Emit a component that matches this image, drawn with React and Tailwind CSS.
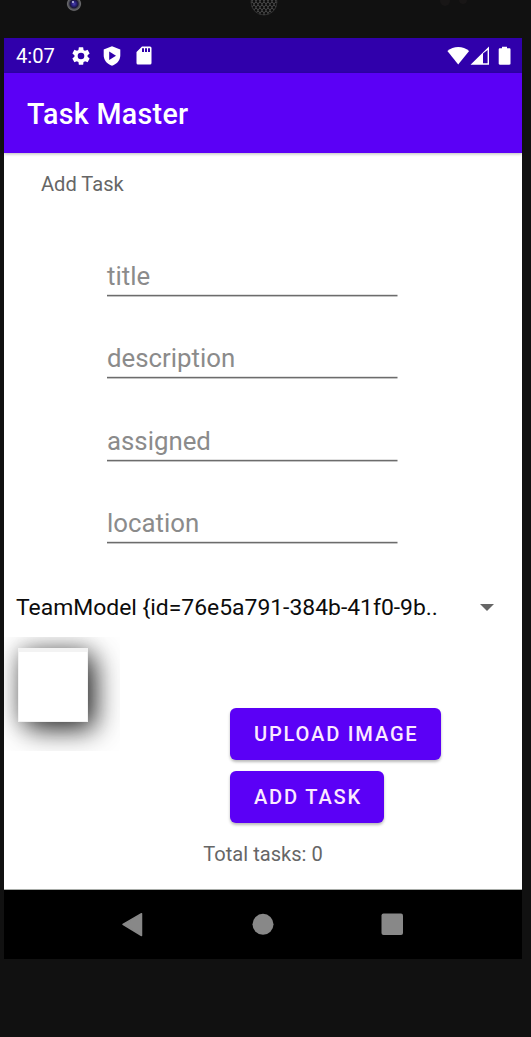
import React from "react";

const fields = ["title", "description", "assigned", "location"];

function Bezel() {
  return (
    <svg className="block h-[38px] w-full shrink-0" viewBox="0 0 531 38">
      <defs>
        <pattern id="mesh" width="4" height="6" patternUnits="userSpaceOnUse">
          <rect width="4" height="6" fill="#484848" />
          <circle cx="2" cy="1.5" r="1.400" fill="#0c0c0c" />
          <circle cx="0" cy="4.500" r="1.400" fill="#0c0c0c" />
          <circle cx="4" cy="4.500" r="1.400" fill="#0c0c0c" />
        </pattern>
        <radialGradient id="lens">
          <stop offset="0" stopColor="#5048b0" />
          <stop offset="0.3" stopColor="#2a2080" />
          <stop offset="0.55" stopColor="#1b1838" />
          <stop offset="0.7" stopColor="#4c4c54" />
          <stop offset="0.88" stopColor="#68686b" />
          <stop offset="1" stopColor="#222222" />
        </radialGradient>
      </defs>
      <circle cx="74" cy="3.8" r="7.4" fill="url(#lens)" />
      <circle cx="73" cy="2" r="1" fill="#c8c8e8" />
      <circle cx="264" cy="2" r="13" fill="url(#mesh)" stroke="#333333" strokeWidth="0.8" />
      <circle cx="445" cy="1" r="5" fill="#181616" />
      <circle cx="463" cy="0" r="4" fill="#181616" />
    </svg>
  );
}

function StatusBar() {
  return (
    <div className="flex h-[35px] shrink-0 items-center bg-[#3000ab] pl-3 text-white">
      <span className="w-[53px] pt-[2px] text-[20.2px] leading-[35px]">4:07</span>
      <svg className="ml-[0.5px] size-[22px] shrink-0" viewBox="0 0 24 24" fill="currentColor">
        <path d="M19.14 12.94c.04-.3.06-.61.06-.94 0-.32-.02-.64-.07-.94l2.03-1.58a.49.49 0 0 0 .12-.61l-1.92-3.32a.488.488 0 0 0-.59-.22l-2.39.96c-.5-.38-1.03-.7-1.62-.94l-.36-2.54a.484.484 0 0 0-.48-.41h-3.84c-.24 0-.43.17-.47.41l-.36 2.54c-.59.24-1.13.57-1.62.94l-2.39-.96c-.22-.08-.47 0-.59.22L2.74 8.87c-.12.21-.08.47.12.61l2.03 1.58c-.05.3-.09.63-.09.94s.02.64.07.94l-2.03 1.58a.49.49 0 0 0-.12.61l1.92 3.32c.12.22.37.29.59.22l2.39-.96c.5.38 1.03.7 1.62.94l.36 2.54c.05.24.24.41.48.41h3.84c.24 0 .44-.17.47-.41l.36-2.54c.59-.24 1.13-.56 1.62-.94l2.39.96c.22.08.47 0 .59-.22l1.92-3.32c.12-.22.07-.47-.12-.61l-2.01-1.58zM12 15.6A3.6 3.6 0 1 1 12 8.4a3.6 3.6 0 0 1 0 7.2z" />
      </svg>
      <svg className="ml-[11.4px] h-5 w-[18px] shrink-0" viewBox="0 0 18 20">
        <path d="M9 .3 17.3 3.4V9c0 5.200-3.300 9-8.300 10.800C4 18 .7 14.200.7 9V3.400Z" fill="currentColor" />
        <path d="M6.200 5.400v8.600l6.800-4.300Z" fill="#3000ab" />
      </svg>
      <svg className="ml-[15px] h-[19px] w-4 shrink-0" viewBox="0 0 16 19">
        <path d="M6 .5h8A1.500 1.500 0 0 1 15.500 2v15a1.500 1.500 0 0 1-1.500 1.500H2A1.500 1.500 0 0 1 .5 17V6Z" fill="currentColor" />
        <path d="M6 2.300h2v3.700H6zM9 2.300h2v3.700H9zM12 2.300h2v3.700h-2z" fill="#3000ab" />
      </svg>
      <svg className="mr-[10px] ml-auto h-5 w-[65px] shrink-0" viewBox="0 0 65 20" fill="currentColor">
        <path d="M.4 5C6.500-.5 16-.5 22.100 5L11.200 18.500Z" />
        <path fillRule="evenodd" d="M23.500 18.800 42 .6V18.800ZM36 7.600V17.200h4.600V4Z" />
        <path d="M55 .7h5v1.600h2.300c.8 0 1.200.5 1.200 1.200v14c0 .8-.5 1.200-1.200 1.200h-9.400c-.8 0-1.200-.5-1.200-1.200v-14c0-.8.500-1.200 1.200-1.200h2.100Z" />
      </svg>
    </div>
  );
}

function Field({ label }) {
  return (
    <div className="flex h-[82.4px] flex-col">
      <div className="h-[38px] text-[25.8px] leading-[41px] text-[#8b8b8b]">{label}</div>
      <svg className="block h-[3px] w-[291px] shrink-0" viewBox="0 0 291 3">
        <rect y="0.800" width="290.500" height="1.600" fill="#6c6c6c" />
      </svg>
    </div>
  );
}

function Button({ children }) {
  return (
    <button className="h-[52px] rounded-[6px] bg-[#5b00f6] pr-[22px] pl-6 text-[20.1px] leading-[53px] font-medium tracking-[1.8px] whitespace-nowrap text-[#fbe9ff] shadow-[0_2px_3px_rgba(0,0,0,0.28)]">
      {children}
    </button>
  );
}

export default function App() {
  return (
    <div className="flex h-[1037px] w-[531px] flex-col overflow-hidden bg-[#111111] font-['Roboto',sans-serif]">
      <Bezel />
      <div className="ml-1 flex h-[921px] w-[518px] flex-col bg-white">
        <StatusBar />
        <header className="z-10 h-[80px] shrink-0 bg-[#5b00f6] pl-[23px] text-[28.600px] leading-[82px] font-medium tracking-[0.34px] text-white shadow-[0_1px_3px_rgba(0,0,0,0.28)]">
          Task Master
        </header>
        <main className="flex h-[737px] shrink-0 flex-col border-b border-[#a8aca8]">
          <div className="mt-[16px] h-[30px] pl-[37px] text-[20.1px] leading-[30px] text-[#666666]">Add Task</div>
          <div className="mt-[57px] flex h-[331px] flex-col pl-[103px]">
            {fields.map((f) => (
              <Field key={f} label={f} />
            ))}
          </div>
          <div className="mt-[5px] flex h-[30px] items-center justify-between pr-[28px] pl-3">
            <span className="pt-[2px] text-[22.9px] leading-[30px] whitespace-nowrap text-[#0c0c0c]">
              TeamModel {"{"}id=76e5a791-384b-41f0-9b..
            </span>
            <svg className="h-[7px] w-[14px]" viewBox="0 0 14 7">
              <path d="M0 0h14L7 7Z" fill="#666666" />
            </svg>
          </div>
          <div className="mt-[15px] flex h-[186px]">
            <div className="h-[114px] w-[116px] overflow-hidden pt-[11px] pl-[14px]">
              <div className="h-[74px] w-[70px] border border-t-[4px] border-[#f3f3f3] bg-white shadow-[8px_8px_28px_-1px_rgba(0,0,0,0.8),0_0_20px_rgba(0,0,0,0.28)]" />
            </div>
            <div className="ml-[110px] flex flex-col items-start gap-[11px] pt-[71px]">
              <Button>UPLOAD IMAGE</Button>
              <Button>ADD TASK</Button>
            </div>
          </div>
          <div className="mt-[16px] h-[30px] text-center text-[20.1px] leading-[30px] text-[#666666]">Total tasks: 0</div>
        </main>
        <nav className="h-[69px] shrink-0 bg-black">
          <svg className="block h-[69px] w-[518px]" viewBox="0 0 518 69" fill="#888888">
            <path d="M137.500 23.700v21.800L119 34.300Z" stroke="#888888" strokeWidth="1.500" strokeLinejoin="round" />
            <circle cx="259" cy="34.300" r="10.500" />
            <rect x="377.500" y="23.500" width="21.500" height="21.500" rx="2" />
          </svg>
        </nav>
      </div>
    </div>
  );
}
